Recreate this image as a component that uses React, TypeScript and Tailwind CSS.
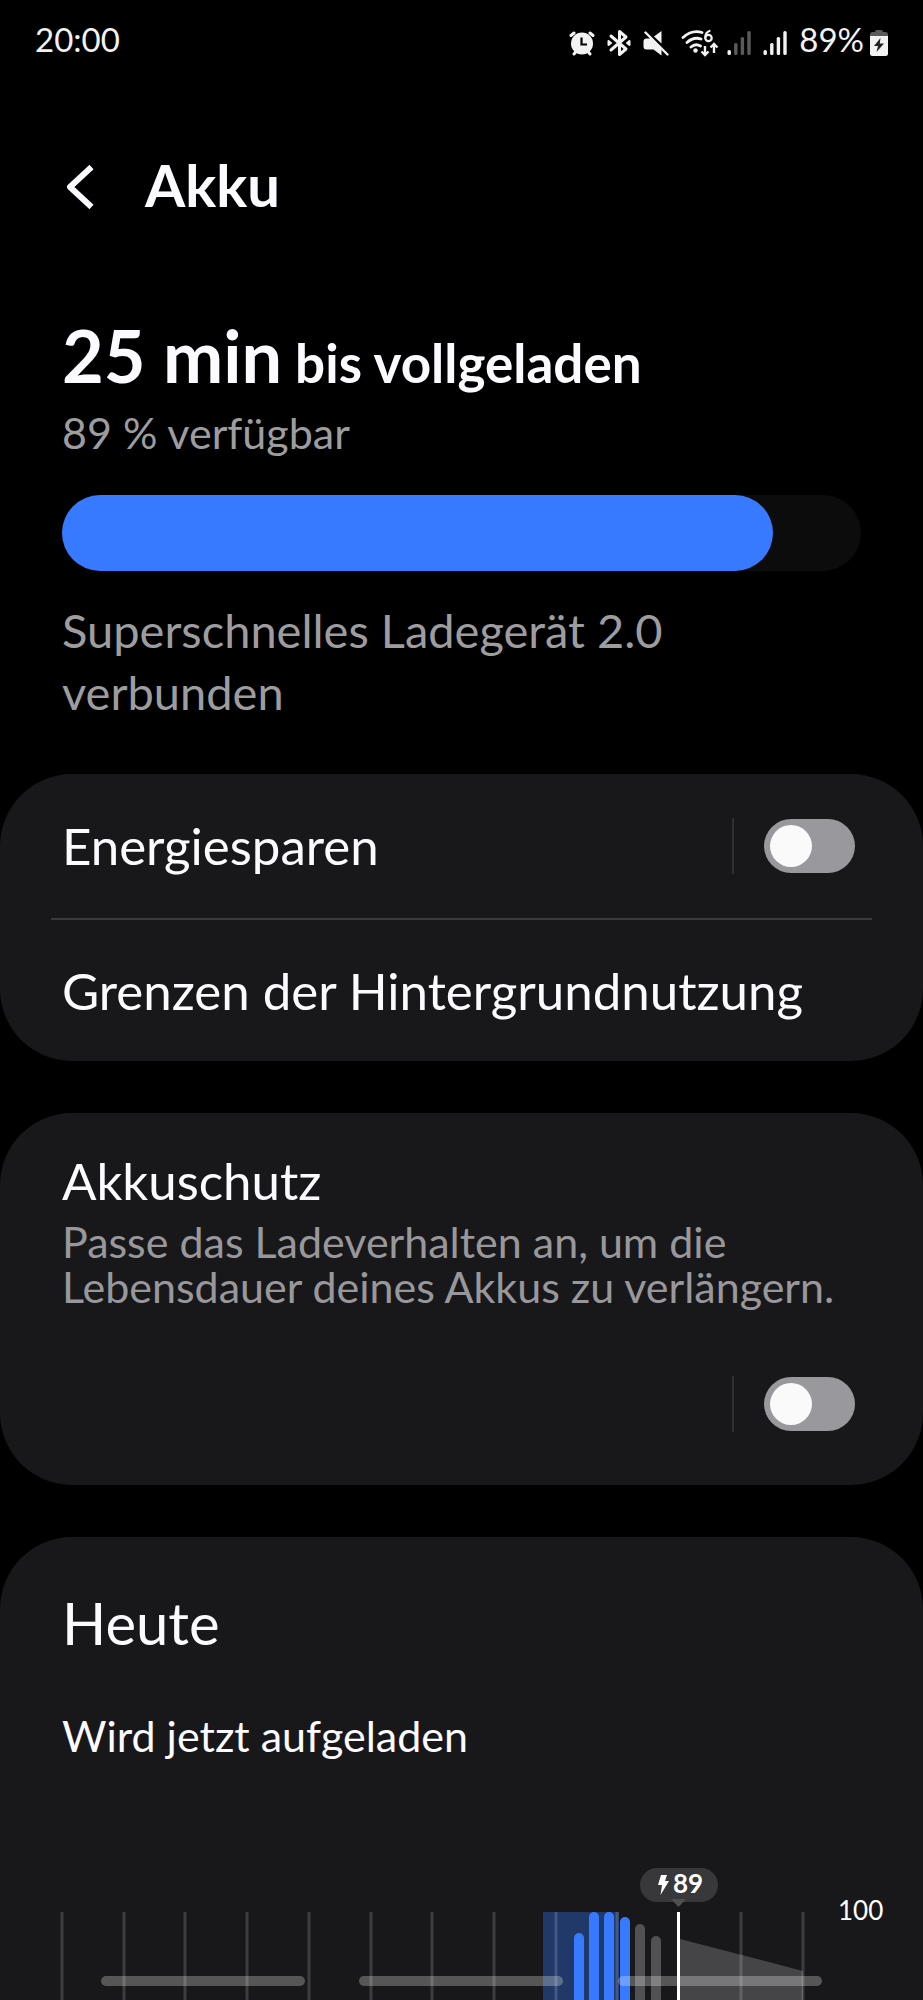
import { useState } from 'react';

const GRID_LINES = [62, 124, 185, 247, 309, 371, 432, 494, 556, 617, 741, 803];

const BARS = [
  { x: 574, top: 73, color: '#387aff' },
  { x: 589, top: 52, color: '#387aff' },
  { x: 604, top: 52, color: '#387aff' },
  { x: 620, top: 57, color: '#387aff' },
  { x: 635, top: 64, color: '#515154' },
  { x: 651, top: 76, color: '#515154' },
];

const PILLS = [101, 359, 618];

function AlarmIcon() {
  return (
    <svg width="26" height="26" viewBox="0 0 26 26" aria-hidden="true">
      <g stroke="#f2f2f2" strokeWidth="3" strokeLinecap="round">
        <path d="M2 5.500 5 3M21 3l3 2.500M5 24l2.500-3M21 24l-2.500-3" />
      </g>
      <circle cx="13" cy="13.500" r="11" fill="#f2f2f2" />
      <path d="M12.500 7.500v7h5.500" fill="none" stroke="#000" strokeWidth="2.200" />
    </svg>
  );
}

function BluetoothIcon() {
  return (
    <svg width="24" height="28" viewBox="0 0 24 28" fill="none" stroke="#f2f2f2" aria-hidden="true">
      <path d="M4 7 19 20 12.500 25.500v-23L19 8 4 21" strokeWidth="3" strokeLinejoin="round" strokeLinecap="round" />
      <path d="m1.500 12 2.500 2-2.500 2zM22.500 12 20 14l2.500 2z" fill="#f2f2f2" strokeWidth="2" strokeLinejoin="round" />
    </svg>
  );
}

function MuteIcon() {
  return (
    <svg width="26" height="26" viewBox="0 0 26 26" aria-hidden="true">
      <path d="M11 6.500 18.500 1v12.500zM3.500 8.500h5L18.500 18.500V25.500l-8-6H3.500Q.5 19.500 .5 16.500v-5q0-3 3-3z" fill="#f2f2f2" />
      <path d="M2.500 2.500 24.500 24.500" stroke="#f2f2f2" strokeWidth="2.400" strokeLinecap="round" />
    </svg>
  );
}

function WifiIcon() {
  return (
    <svg width="38" height="28" viewBox="0 0 38 28" fill="none" stroke="#f2f2f2" strokeWidth="2.800" strokeLinecap="round" aria-hidden="true">
      <path d="M2 8.500Q11 .5 21 3.500M6 13.500q6.500-6 14-3.500M10 18q4.500-4 9.500-1" />
      <circle cx="14.500" cy="21.500" r="2.200" fill="#f2f2f2" stroke="none" />
      <path d="M28.500 2q-4.200 1.500-4.200 6.500" strokeWidth="2.200" />
      <circle cx="27.500" cy="9" r="3.200" strokeWidth="2.200" />
      <path d="M24 17v8.500M20.500 22.500l3.500 3.500 3.500-3.500M33 24V15.500M29.500 18.500l3.500-3.500 3.500 3.500" strokeWidth="2.400" strokeLinecap="butt" />
    </svg>
  );
}

function SignalIcon({ level }: { level: number }) {
  return (
    <svg width="24" height="26" viewBox="0 0 24 26" aria-hidden="true">
      {[20, 13, 7, 1].map((top, i) => (
        <rect key={top} x={i * 6.6 + 0.5} y={top} width="3.400" height={25 - top} rx="1.500" fill={i < level ? '#f2f2f2' : '#5a5a5a'} />
      ))}
    </svg>
  );
}

function BatteryIcon() {
  return (
    <svg width="18" height="26" viewBox="0 0 18 26" aria-hidden="true">
      <path d="M5 2q0-2 2-2h4q2 0 2 2h2.500Q18 2 18 5v2H0V5q0-3 2.500-3z" fill="#5a5a5a" />
      <path d="M0 6h18v17.500q0 2.500-2.500 2.500h-13Q0 26 0 23.500z" fill="#f2f2f2" />
      <path d="M10.500 8 4 16h4L6.500 22l7.500-8.500h-4.200z" fill="#222" />
    </svg>
  );
}

function Toggle({ id, label, checked, onChange }: { id: string; label: string; checked: boolean; onChange: (v: boolean) => void }) {
  return (
    <div className="flex items-center gap-[30px] border-l-2 border-[#2f2f31] pl-[30px] h-14 shrink-0">
      <input
        id={id}
        type="checkbox"
        role="switch"
        aria-label={label}
        checked={checked}
        onChange={(e) => onChange(e.target.checked)}
        className="appearance-none flex items-center w-[91px] h-[54px] px-[6px] rounded-full bg-[#99989d] checked:bg-[#387aff] before:block before:size-[42px] before:rounded-full before:bg-[#fafafa] checked:before:ml-auto"
      />
    </div>
  );
}

function BatteryChart() {
  return (
    <svg viewBox="0 0 923 140" className="block w-full" role="img" aria-label="Akkuverlauf">
      <rect x="543" y="52" width="76" height="88" fill="#213968" />
      <path d="M680 79 803 111v29H680z" fill="#454447" />
      {GRID_LINES.map((x) => (
        <rect key={x} x={x - 1.5} y="52" width="3" height="88" fill="#fff" fillOpacity="0.160" />
      ))}
      {BARS.map((b) => (
        <path key={b.x} d={`M${b.x} 140V${b.top + 5}a5 5 0 0 1 10 0V140z`} fill={b.color} />
      ))}
      <rect x="677" y="52" width="3" height="88" fill="#fff" />
      <rect x="640" y="8" width="78" height="34" rx="17" fill="#38383a" />
      <path d="M671 39h15l-7.500 8z" fill="#505052" />
      <path d="M661 15h6l-2 6h4l-8.500 14 1.500-10h-4z" fill="#fff" />
      <text x="673" y="33" fill="#fff" fontSize="26" fontWeight="700">89</text>
      <text x="838" y="60" fill="#fff" fontSize="26">100</text>
      {PILLS.map((x) => (
        <rect key={x} x={x} y="116" width="204" height="10" rx="5" fill="#fff" fillOpacity="0.270" />
      ))}
    </svg>
  );
}

export default function App() {
  const [powerSaving, setPowerSaving] = useState(false);
  const [protection, setProtection] = useState(false);
  const percent = 89;

  return (
    <div className="min-h-screen bg-black text-[#fafaff] font-[Lato,sans-serif]">
      <header>
        <div className="flex items-center justify-between h-[78px] px-[35px] text-[#f2f2f2]">
          <span className="text-[33px] leading-10">20:00</span>
          <div className="flex items-center gap-3 [&_svg]:mt-2">
            <AlarmIcon />
            <BluetoothIcon />
            <MuteIcon />
            <div className="flex items-center gap-2">
              <WifiIcon />
              <SignalIcon level={1} />
            </div>
            <SignalIcon level={4} />
            <div className="flex items-center gap-[6px]">
              <span className="text-[33px] leading-10">{percent}%</span>
              <BatteryIcon />
            </div>
          </div>
        </div>
        <div className="flex items-center gap-[51px] h-[90px] mt-[62px] px-[66px]">
          <button type="button" aria-label="Zurück" className="mt-1">
            <svg width="28" height="44" viewBox="0 0 28 44" fill="none" stroke="#fafaff" strokeWidth="6">
              <path d="M25.500 2 4 22l21.500 20" strokeLinejoin="round" />
            </svg>
          </button>
          <h1 className="text-[58px] leading-[70px] font-bold">Akku</h1>
        </div>
      </header>

      <main>
        <section className="px-[62px] mt-[85px]">
          <p className="text-[53px] leading-[80px] font-bold">
            <span className="text-[72px]">25 min</span> bis vollgeladen
          </p>
          <p className="text-[43px] leading-[60px] text-[#9d9d9f]">{percent} % verfügbar</p>
          <div className="mt-8 h-[76px] rounded-full bg-[#0c0c0c]" role="progressbar" aria-label="Akkustand" aria-valuenow={percent} aria-valuemin={0} aria-valuemax={100}>
            <div className="h-full rounded-full bg-[#387aff]" style={{ width: `${percent}%` }} />
          </div>
          <p className="mt-7 text-[47px] leading-[62px] text-[#9d9d9f]">Superschnelles Ladegerät 2.0 verbunden</p>
        </section>

        <section className="mt-[51px] rounded-[72px] bg-[#18181a]">
          <div className="flex items-center justify-between h-36 pl-[62px] pr-[68px]">
            <label htmlFor="power-saving" className="text-[51px] leading-[60px]">Energiesparen</label>
            <Toggle id="power-saving" label="Energiesparen" checked={powerSaving} onChange={setPowerSaving} />
          </div>
          <hr className="mx-[51px] border-t-2 border-[#3a3a3c]" />
          <a href="#background" className="flex items-center h-[141px] px-[62px] text-[51px] leading-[60px]">
            Grenzen der Hintergrundnutzung
          </a>
        </section>

        <section className="mt-[52px] pt-[38px] pb-[53px] rounded-[72px] bg-[#18181a]">
          <div className="px-[62px]">
            <label htmlFor="protection" className="block text-[51px] leading-[60px]">Akkuschutz</label>
            <p className="mt-2 text-[43px] leading-[45px] text-[#98989c]">
              Passe das Ladeverhalten an, um die Lebensdauer deines Akkus zu verlängern.
            </p>
          </div>
          <div className="flex justify-end mt-[67px] pr-[68px]">
            <Toggle id="protection" label="Akkuschutz" checked={protection} onChange={setProtection} />
          </div>
        </section>

        <section className="mt-[52px] pt-[51px] rounded-t-[72px] bg-[#18181a]">
          <h2 className="px-[62px] text-[58px] leading-[70px]">Heute</h2>
          <p className="mt-[53px] mb-[99px] px-[62px] text-[43px] leading-[50px]">Wird jetzt aufgeladen</p>
          <BatteryChart />
        </section>
      </main>
    </div>
  );
}
